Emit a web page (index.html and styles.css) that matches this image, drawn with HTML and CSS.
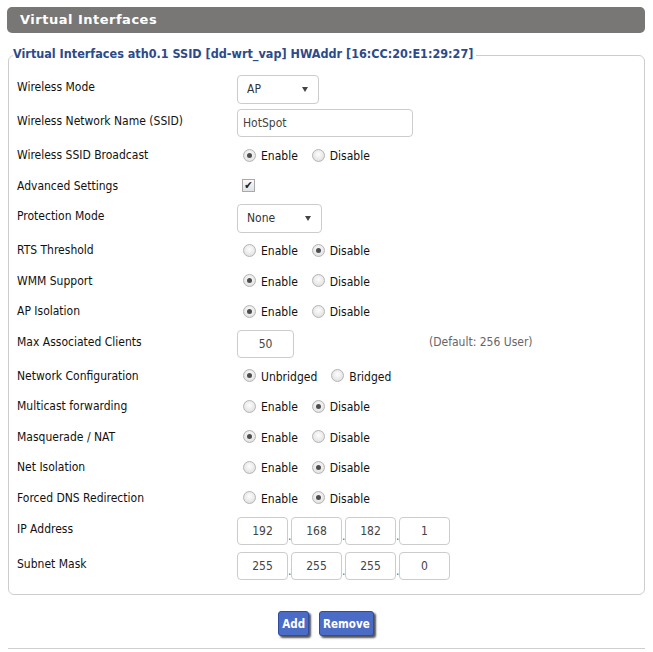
FILE: index.html
```html
<!DOCTYPE html>
<html>
<head>
<meta charset="utf-8">
<link rel="stylesheet" href="styles.css">
</head>
<body>
<div class="page">
  <h2 class="bar">Virtual Interfaces</h2>
  <fieldset class="box">
    <legend>Virtual Interfaces ath0.1 SSID [dd-wrt_vap] HWAddr [16:CC:20:E1:29:27]</legend>
    <div class="row tall"><span class="lbl">Wireless Mode</span><span class="ctl"><span class="select w-mode">AP<i class="arrow"></i></span></span></div>
    <div class="row tall"><span class="lbl">Wireless Network Name (SSID)</span><span class="ctl"><span class="text w-ssid">HotSpot</span></span></div>
    <div class="row"><span class="lbl">Wireless SSID Broadcast</span><span class="ctl"><span class="radio on"></span><span class="opt">Enable</span><span class="radio"></span><span class="opt">Disable</span></span></div>
    <div class="row"><span class="lbl">Advanced Settings</span><span class="ctl"><span class="check">&#10004;</span></span></div>
    <div class="row tall"><span class="lbl">Protection Mode</span><span class="ctl"><span class="select w-prot">None<i class="arrow"></i></span></span></div>
    <div class="row"><span class="lbl">RTS Threshold</span><span class="ctl"><span class="radio"></span><span class="opt">Enable</span><span class="radio on"></span><span class="opt">Disable</span></span></div>
    <div class="row"><span class="lbl">WMM Support</span><span class="ctl"><span class="radio on"></span><span class="opt">Enable</span><span class="radio"></span><span class="opt">Disable</span></span></div>
    <div class="row"><span class="lbl">AP Isolation</span><span class="ctl"><span class="radio on"></span><span class="opt">Enable</span><span class="radio"></span><span class="opt">Disable</span></span></div>
    <div class="row tall"><span class="lbl">Max Associated Clients</span><span class="ctl"><span class="text num w-max">50</span><span class="hint">(Default: 256 User)</span></span></div>
    <div class="row"><span class="lbl">Network Configuration</span><span class="ctl"><span class="radio on"></span><span class="opt">Unbridged</span><span class="radio"></span><span class="opt">Bridged</span></span></div>
    <div class="row"><span class="lbl">Multicast forwarding</span><span class="ctl"><span class="radio"></span><span class="opt">Enable</span><span class="radio on"></span><span class="opt">Disable</span></span></div>
    <div class="row"><span class="lbl">Masquerade / NAT</span><span class="ctl"><span class="radio on"></span><span class="opt">Enable</span><span class="radio"></span><span class="opt">Disable</span></span></div>
    <div class="row"><span class="lbl">Net Isolation</span><span class="ctl"><span class="radio"></span><span class="opt">Enable</span><span class="radio on"></span><span class="opt">Disable</span></span></div>
    <div class="row"><span class="lbl">Forced DNS Redirection</span><span class="ctl"><span class="radio"></span><span class="opt">Enable</span><span class="radio on"></span><span class="opt">Disable</span></span></div>
    <div class="row ip"><span class="lbl">IP Address</span><span class="ctl"><span class="text num oct">192</span><span class="dot">.</span><span class="text num oct">168</span><span class="dot">.</span><span class="text num oct">182</span><span class="dot">.</span><span class="text num oct">1</span></span></div>
    <div class="row ip"><span class="lbl">Subnet Mask</span><span class="ctl"><span class="text num oct">255</span><span class="dot">.</span><span class="text num oct">255</span><span class="dot">.</span><span class="text num oct">255</span><span class="dot">.</span><span class="text num oct">0</span></span></div>
  </fieldset>
  <div class="buttons"><button class="btn">Add</button><button class="btn">Remove</button></div>
  <div class="rule"></div>
</div>
</body>
</html>
```
FILE: styles.css
```css
* { box-sizing: border-box; }
html, body { margin: 0; padding: 0; background: #fff; }
body {
  font-family: "DejaVu Sans Condensed", "DejaVu Sans", sans-serif;
  font-size: 12px;
  color: #111;
}
.page { padding: 7px 8px 0 7px; }
.bar {
  margin: 0;
  height: 26px;
  background: #787775;
  border-radius: 5px;
  color: #fff;
  font-family: "DejaVu Sans", sans-serif;
  font-weight: bold;
  font-size: 13px;
  line-height: 26px;
  padding-left: 13px;
  letter-spacing: 0.5px;
}
.box {
  margin: 15px 0 0 1px;
  border: 1px solid #cdcdcd;
  border-radius: 6px;
  padding: 9px 0 11px 8px;
  min-width: 0;
}
.box legend {
  padding: 0 3px 0 0;
  margin-left: -4px;
  color: #2d4a8a;
  font-weight: bold;
  font-size: 12.5px;
  position: relative;
  top: -2px;
}
.row { display: flex; align-items: center; height: 30.5px; }
.row.tall { height: 34px; }
.row.ip { height: 35px; }
.lbl { width: 220px; flex: none; }
.row.tall .lbl, .row.ip .lbl { position: relative; top: -2px; }
.ctl { display: flex; align-items: center; }
.select, .text {
  display: inline-flex;
  align-items: center;
  height: 29px;
  border: 1px solid #cccccc;
  border-radius: 4px;
  background: #fff;
  color: #333;
  padding-left: 9px;
  position: relative;
}
.text { height: 28px; color: #444; padding-left: 5px; }
.w-mode { width: 82px; }
.w-prot { width: 85px; }
.w-ssid { width: 176px; }
.w-max { width: 57px; }
.num { justify-content: center; padding-left: 0; }
.oct { width: 51px; }
.dot { width: 3px; text-align: center; position: relative; top: 5px; color: #666; }
.arrow {
  position: absolute;
  right: 10px; top: 11px;
  width: 0; height: 0;
  border-left: 3px solid transparent;
  border-right: 3px solid transparent;
  border-top: 5px solid #444;
}
.radio {
  width: 13px; height: 13px;
  border-radius: 50%;
  border: 1px solid #b4b4b4;
  background: radial-gradient(circle at 50% 40%, #fdfdfd 0, #e8e8e8 60%, #d8d8d8 100%);
  margin-left: 6px;
  margin-right: 5px;
  position: relative;
  flex: none;
}
.radio.on::after {
  content: "";
  position: absolute;
  left: 3px; top: 3px;
  width: 5px; height: 5px;
  border-radius: 50%;
  background: #4d4d4d;
}
.opt { margin-right: 8px; position: relative; top: 1px; }
.check {
  width: 13px; height: 13px;
  border: 1px solid #a9a9a9;
  background: linear-gradient(#fafafa, #e2e2e2);
  font-size: 11px;
  line-height: 11px;
  text-align: center;
  color: #222;
  margin-left: 5px;
}
.hint { margin-left: 135px; color: #666; position: relative; top: -2px; }
.buttons { display: flex; justify-content: center; gap: 10px; padding: 16px 0 0 0; }
.btn {
  font-family: "DejaVu Sans Condensed", sans-serif;
  font-weight: bold;
  font-size: 11.5px;
  color: #fff;
  background: #4a6cc7;
  border: 1px solid #2f4d9c;
  border-radius: 3px;
  height: 25px;
  padding: 0 3px;
  box-shadow: 2px 2px 2px #555;
}
.rule { margin: 12px 0 0 1px; height: 1px; background: #cfcfcf; }
```
